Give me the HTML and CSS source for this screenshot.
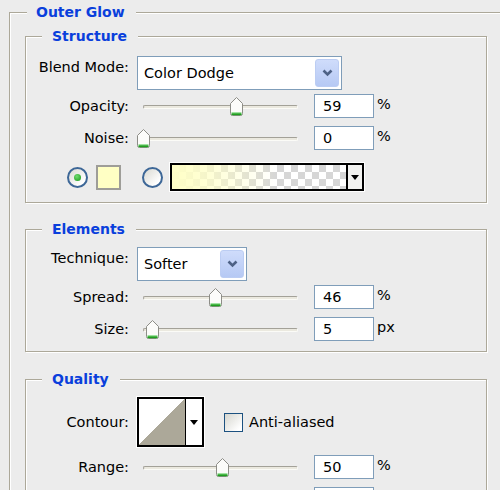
FILE: index.html
```html
<!DOCTYPE html>
<html>
<head>
<meta charset="utf-8">
<link rel="stylesheet" href="styles.css">
</head>
<body>
<fieldset class="group outer">
  <legend class="legend-outer">Outer Glow</legend>

  <fieldset class="group sub structure">
    <legend>Structure</legend>
    <div class="row row-select">
      <span class="lbl">Blend Mode:</span>
      <div class="select select-wide">
        <span class="val">Color Dodge</span>
        <span class="btn"><svg width="11" height="8" viewBox="0 0 11 8"><path d="M1.5 1.5 L5.5 5.5 L9.5 1.5" fill="none" stroke="#4d6185" stroke-width="2.6"/></svg></span>
      </div>
    </div>
    <div class="row row-slider gap-s">
      <span class="lbl">Opacity:</span>
      <div class="slider"><div class="track"></div><span class="thumb" style="left:92.6px"><svg width="13" height="19" viewBox="0 0 13 19"><path d="M0.5 6.5 L6.5 0.5 L12.5 6.5 V16.5 Q12.5 18.5 10.5 18.5 H2.5 Q0.5 18.5 0.5 16.5 Z" fill="#fcfcfa" stroke="#8d8d87"/><path d="M1.5 15.5 H11.5" stroke="#9fe39f"/><path d="M1.5 17.2 H11.5" stroke="#1fa11f" stroke-width="2"/></svg></span></div>
      <div class="num">59</div><span class="unit">%</span>
    </div>
    <div class="row row-slider gap-m">
      <span class="lbl">Noise:</span>
      <div class="slider"><div class="track"></div><span class="thumb" style="left:0px"><svg width="13" height="19" viewBox="0 0 13 19"><path d="M0.5 6.5 L6.5 0.5 L12.5 6.5 V16.5 Q12.5 18.5 10.5 18.5 H2.5 Q0.5 18.5 0.5 16.5 Z" fill="#fcfcfa" stroke="#8d8d87"/><path d="M1.5 15.5 H11.5" stroke="#9fe39f"/><path d="M1.5 17.2 H11.5" stroke="#1fa11f" stroke-width="2"/></svg></span></div>
      <div class="num">0</div><span class="unit">%</span>
    </div>
    <div class="row row-color">
      <span class="radio checked"></span>
      <span class="swatch"></span>
      <span class="radio radio-2"></span>
      <div class="gradient">
        <div class="grad-fill"></div>
        <span class="grad-btn"><i class="tri"></i></span>
      </div>
    </div>
  </fieldset>

  <fieldset class="group sub elements">
    <legend>Elements</legend>
    <div class="row row-select">
      <span class="lbl">Technique:</span>
      <div class="select select-narrow">
        <span class="val">Softer</span>
        <span class="btn"><svg width="11" height="8" viewBox="0 0 11 8"><path d="M1.5 1.5 L5.5 5.5 L9.5 1.5" fill="none" stroke="#4d6185" stroke-width="2.6"/></svg></span>
      </div>
    </div>
    <div class="row row-slider gap-s">
      <span class="lbl">Spread:</span>
      <div class="slider"><div class="track"></div><span class="thumb" style="left:72.2px"><svg width="13" height="19" viewBox="0 0 13 19"><path d="M0.5 6.5 L6.5 0.5 L12.5 6.5 V16.5 Q12.5 18.5 10.5 18.5 H2.5 Q0.5 18.5 0.5 16.5 Z" fill="#fcfcfa" stroke="#8d8d87"/><path d="M1.5 15.5 H11.5" stroke="#9fe39f"/><path d="M1.5 17.2 H11.5" stroke="#1fa11f" stroke-width="2"/></svg></span></div>
      <div class="num">46</div><span class="unit">%</span>
    </div>
    <div class="row row-slider gap-m">
      <span class="lbl">Size:</span>
      <div class="slider"><div class="track"></div><span class="thumb" style="left:9px"><svg width="13" height="19" viewBox="0 0 13 19"><path d="M0.5 6.5 L6.5 0.5 L12.5 6.5 V16.5 Q12.5 18.5 10.5 18.5 H2.5 Q0.5 18.5 0.5 16.5 Z" fill="#fcfcfa" stroke="#8d8d87"/><path d="M1.5 15.5 H11.5" stroke="#9fe39f"/><path d="M1.5 17.2 H11.5" stroke="#1fa11f" stroke-width="2"/></svg></span></div>
      <div class="num">5</div><span class="unit">px</span>
    </div>
  </fieldset>

  <fieldset class="group sub quality">
    <legend>Quality</legend>
    <div class="row row-contour">
      <span class="lbl">Contour:</span>
      <div class="contour">
        <span class="curve"></span>
        <span class="contour-btn"><i class="tri"></i></span>
      </div>
      <span class="checkbox"></span>
      <span class="check-label">Anti-aliased</span>
    </div>
    <div class="row row-slider gap-m">
      <span class="lbl">Range:</span>
      <div class="slider"><div class="track"></div><span class="thumb" style="left:78.5px"><svg width="13" height="19" viewBox="0 0 13 19"><path d="M0.5 6.5 L6.5 0.5 L12.5 6.5 V16.5 Q12.5 18.5 10.5 18.5 H2.5 Q0.5 18.5 0.5 16.5 Z" fill="#fcfcfa" stroke="#8d8d87"/><path d="M1.5 15.5 H11.5" stroke="#9fe39f"/><path d="M1.5 17.2 H11.5" stroke="#1fa11f" stroke-width="2"/></svg></span></div>
      <div class="num">50</div><span class="unit">%</span>
    </div>
    <div class="row row-slider gap-m">
      <span class="lbl"></span>
      <div class="slider"></div>
      <div class="num"></div>
    </div>
  </fieldset>
</fieldset>
</body>
</html>
```

FILE: styles.css
```css
html, body {
  margin: 0;
  padding: 0;
  overflow: hidden;
  background: #ececec;
}
body {
  width: 500px;
  height: 490px;
  font-family: "DejaVu Sans", sans-serif;
  font-size: 14.5px;
  color: #000;
}

.group {
  box-sizing: border-box;
  border: 1px solid #aca899;
  box-shadow: 1px 1px 0 #fff, inset 1px 1px 0 #fff;
  margin: 0;
  padding: 0;
  min-width: 0;
}
.group legend {
  font-family: "DejaVu Sans", sans-serif;
  font-weight: bold;
  font-size: 14px;
  line-height: 16px;
  color: #0a3fdc;
  padding: 0 11px 0 10px;
  margin-left: 16px;
  background: #ececec;
}

.outer {
  margin: 4px 0 0 9px;
  width: 491px;
  height: 486px;
  padding: 8px 0 0 15px;
  border-right: none;
  border-bottom: none;
  box-shadow: inset 1px 1px 0 #fff;
  overflow: hidden;
}
.outer > .legend-outer {
  margin-left: 2px;
  padding: 0 11px 0 9px;
}

.sub {
  width: 462px;
}
.structure {
  padding: 12px 0 11px 0;
  margin-bottom: 18px;
}
.elements {
  padding: 10px 0 10px 0;
  margin-bottom: 19px;
}
.quality {
  padding: 10px 0 0 0;
  border-bottom: none;
}

.row {
  display: flex;
  align-items: center;
}
.gap-s { margin-top: 4px; }
.gap-m { margin-top: 8px; }

.lbl {
  flex: none;
  width: 103px;
  margin-right: 8px;
  text-align: right;
  line-height: 17px;
  white-space: nowrap;
}

.row-select {
  height: 34px;
  align-items: flex-start;
}
.row-select .lbl {
  padding-top: 3px;
}
.select {
  box-sizing: border-box;
  height: 34px;
  border: 1px solid #7f9db9;
  background: #fff;
  display: flex;
  align-items: center;
  padding: 2px;
}
.select-wide { width: 205px; }
.select-narrow { width: 110px; }
.select .val {
  flex: 1;
  padding-left: 4px;
  white-space: nowrap;
}
.select .btn {
  flex: none;
  align-self: stretch;
  width: 24px;
  box-sizing: border-box;
  border: 1px solid #bccdf3;
  border-radius: 3px;
  background: linear-gradient(#cfdcfb, #b6c9f4);
  display: flex;
  align-items: center;
  justify-content: center;
}

.row-slider {
  height: 24px;
}
.slider {
  position: relative;
  flex: none;
  width: 168px;
  height: 24px;
  display: flex;
  align-items: center;
}
.track {
  box-sizing: border-box;
  margin: 2px 0 0 6px;
  width: 155px;
  height: 4px;
  border: 1px solid;
  border-color: #a3a198 #fbfbf7 #fbfbf7 #a3a198;
  border-radius: 3px;
  background: #ebe9df;
}
.thumb {
  position: absolute;
  top: 3px;
  width: 13px;
  height: 19px;
}
.thumb svg { display: block; }

.num {
  box-sizing: border-box;
  flex: none;
  width: 60px;
  height: 24px;
  margin-left: 9px;
  border: 1px solid #7f9db9;
  background: #fff;
  padding-left: 8px;
  line-height: 22px;
}
.unit {
  margin-left: 3px;
  line-height: 17px;
  margin-bottom: 3px;
}

.row-color {
  height: 28px;
  margin-top: 13px;
}
.radio {
  flex: none;
  box-sizing: border-box;
  width: 21px;
  height: 21px;
  border-radius: 50%;
  border: 2px solid #3d6797;
  background: linear-gradient(135deg, #d9d9d2, #ffffff 80%);
  margin-left: 41px;
  display: flex;
  align-items: center;
  justify-content: center;
}
.radio.checked::after {
  content: "";
  width: 7px;
  height: 7px;
  border-radius: 50%;
  background: radial-gradient(circle at 40% 35%, #6fdc6f, #159615);
}
.radio-2 { margin-left: 21px; }
.swatch {
  flex: none;
  box-sizing: border-box;
  width: 25px;
  height: 25px;
  margin-left: 8px;
  border: 2px solid #9e9d98;
  background: #ffffc4;
}
.gradient {
  flex: none;
  box-sizing: border-box;
  width: 194px;
  height: 28px;
  margin-left: 7px;
  border: 2px solid #000;
  box-shadow: 0 0 0 1px #fff;
  display: flex;
}
.grad-fill {
  flex: 1;
  background:
    linear-gradient(to right, #ffffc6 0%, rgba(255,255,198,0.75) 20%, rgba(255,255,198,0) 60%),
    repeating-conic-gradient(#d6d6d6 0 25%, #ffffff 0 50%) 0 0 / 14px 14px;
}
.grad-btn {
  flex: none;
  width: 14px;
  border-left: 2px solid #000;
  background: #f2f2f0;
  display: flex;
  align-items: center;
  justify-content: center;
}
.tri {
  width: 0;
  height: 0;
  border-left: 4px solid transparent;
  border-right: 4px solid transparent;
  border-top: 5px solid #000;
}

.row-contour {
  height: 50px;
}
.contour {
  flex: none;
  box-sizing: border-box;
  width: 67px;
  height: 50px;
  border: 2px solid #000;
  box-shadow: 0 0 0 1px #fff;
  display: flex;
  background: #fff;
}
.curve {
  flex: none;
  width: 46px;
  border-right: 1px solid #000;
  background: linear-gradient(to bottom right, #fff 50%, #aca899 50%);
}
.contour-btn {
  flex: 1;
  display: flex;
  align-items: center;
  justify-content: center;
}
.checkbox {
  flex: none;
  box-sizing: border-box;
  width: 19px;
  height: 19px;
  margin-left: 20px;
  border: 1px solid #1c5180;
  background: linear-gradient(135deg, #d6d6cf, #ffffff 85%);
}
.check-label {
  margin-left: 6px;
  white-space: nowrap;
}
```
